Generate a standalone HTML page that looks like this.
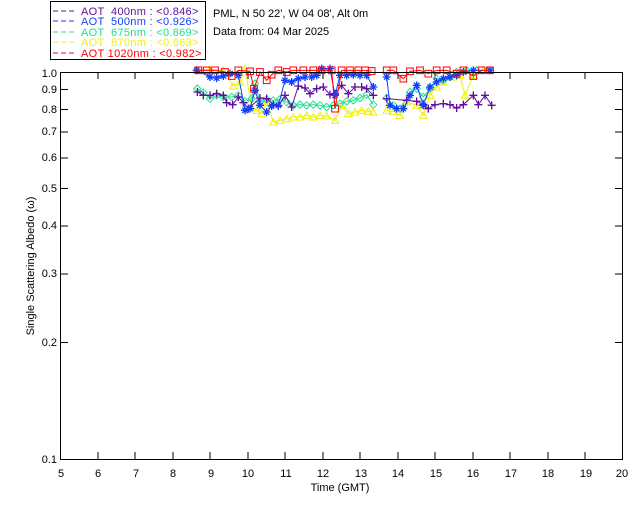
<!DOCTYPE html>
<html><head><meta charset="utf-8"><style>
body{margin:0;background:#fff;width:640px;height:512px;overflow:hidden}
svg text{font-family:"Liberation Sans",sans-serif;font-size:11px}
</style></head><body>
<svg width="640" height="512" xmlns="http://www.w3.org/2000/svg">
<defs>
<marker id="mp" markerUnits="userSpaceOnUse" markerWidth="24" markerHeight="24" refX="12" refY="12" overflow="visible"><path d="M0 12H24M12 0V24" stroke="#6010a0" stroke-width="4" fill="none"/></marker>
<marker id="mb" markerUnits="userSpaceOnUse" markerWidth="24" markerHeight="24" refX="12" refY="12" overflow="visible"><path d="M0 12H24M12 0V24M4 4L20 20M20 4L4 20" stroke="#1040ff" stroke-width="4" fill="none"/></marker>
<marker id="mc" markerUnits="userSpaceOnUse" markerWidth="24" markerHeight="24" refX="12" refY="12" overflow="visible"><path d="M12 1L23 12L12 23L1 12Z" stroke="#20e090" stroke-width="3" fill="none"/></marker>
<marker id="my" markerUnits="userSpaceOnUse" markerWidth="24" markerHeight="24" refX="12" refY="12" overflow="visible"><path d="M12 2L23 21H1Z" stroke="#f0f000" stroke-width="3" fill="none"/></marker>
<marker id="mr" markerUnits="userSpaceOnUse" markerWidth="24" markerHeight="24" refX="12" refY="12" overflow="visible"><path d="M2 2H22V22H2Z" stroke="#ff0000" stroke-width="3" fill="none"/></marker>
</defs>
<rect x="50.5" y="1.5" width="155" height="58" fill="#fff" stroke="#000"/>
<g stroke-dasharray="5,3" stroke-width="1">
<line x1="53" y1="11" x2="77" y2="11" stroke="#6010a0"/>
<line x1="53" y1="21" x2="77" y2="21" stroke="#1040ff"/>
<line x1="53" y1="32" x2="77" y2="32" stroke="#20e090"/>
<line x1="53" y1="42" x2="77" y2="42" stroke="#f0f000"/>
<line x1="53" y1="53" x2="77" y2="53" stroke="#ff0000"/>
</g>
<g letter-spacing="0.3">
<text x="81" y="15" fill="#6010a0" xml:space="preserve">AOT  400nm : &lt;0.846&gt;</text>
<text x="81" y="25" fill="#1040ff" xml:space="preserve">AOT  500nm : &lt;0.926&gt;</text>
<text x="81" y="36" fill="#20e090" xml:space="preserve">AOT  675nm : &lt;0.869&gt;</text>
<text x="81" y="46" fill="#f0f000" xml:space="preserve">AOT  870nm : &lt;0.863&gt;</text>
<text x="81" y="57" fill="#ff0000" xml:space="preserve">AOT 1020nm : &lt;0.982&gt;</text>
</g>
<text x="213" y="17" fill="#000">PML, N 50 22', W 04 08', Alt 0m</text>
<text x="213" y="35" fill="#000">Data from: 04 Mar 2025</text>
<rect x="60.5" y="72.5" width="562" height="387" fill="none" stroke="#000"/>
<g stroke="#000">
<path d="M98 72v7M135 72v7M173 72v7M210 72v7M248 72v7M285 72v7M323 72v7M360 72v7M398 72v7M435 72v7M473 72v7M510 72v7M548 72v7M585 72v7"/>
<path d="M98 459v-7M135 459v-7M173 459v-7M210 459v-7M248 459v-7M285 459v-7M323 459v-7M360 459v-7M398 459v-7M435 459v-7M473 459v-7M510 459v-7M548 459v-7M585 459v-7"/>
<path d="M60 89.5h8M60 109.5h8M60 132h8M60 158h8M60 188.5h8M60 226h8M60 274h8M60 342.5h8"/>
<path d="M623 89.5h-8M623 109.5h-8M623 132h-8M623 158h-8M623 188.5h-8M623 226h-8M623 274h-8M623 342.5h-8"/>
</g>
<g fill="#000" text-anchor="end">
<text x="57" y="77">1.0</text><text x="57" y="93">0.9</text><text x="57" y="113">0.8</text><text x="57" y="135">0.7</text><text x="57" y="161">0.6</text><text x="57" y="192">0.5</text><text x="57" y="229">0.4</text><text x="57" y="277">0.3</text><text x="57" y="346">0.2</text><text x="57" y="463">0.1</text>
</g>
<g fill="#000" text-anchor="middle">
<text x="61" y="477">5</text><text x="98" y="477">6</text><text x="136" y="477">7</text><text x="173" y="477">8</text><text x="211" y="477">9</text><text x="248" y="477">10</text><text x="286" y="477">11</text><text x="323" y="477">12</text><text x="361" y="477">13</text><text x="398" y="477">14</text><text x="436" y="477">15</text><text x="473" y="477">16</text><text x="511" y="477">17</text><text x="548" y="477">18</text><text x="586" y="477">19</text><text x="622" y="477">20</text>
<text x="340" y="491">Time (GMT)</text>
<text transform="translate(34,266) rotate(-90)">Single Scattering Albedo (ω)</text>
</g>
<g transform="translate(190,62) scale(0.33333)" fill="none" stroke-width="3">
<polyline stroke="#f0f000" marker-start="url(#my)" marker-mid="url(#my)" marker-end="url(#my)" points="20,22 60,22 100,25 130,72 150,60 165,20 185,135 200,145 215,155 230,120 250,180 270,175 290,170 310,165 330,165 350,160 370,165 390,160 410,162 435,175 455,130 475,155 495,150 515,145 535,148 550,150"/>
<polyline stroke="#f0f000" marker-start="url(#my)" marker-mid="url(#my)" marker-end="url(#my)" points="590,145 610,148 630,160 650,120 680,130 700,160 720,100 740,75 760,60 790,45 810,40 825,100 850,40 880,25"/>
<polyline stroke="#20e090" marker-start="url(#mc)" marker-mid="url(#mc)" marker-end="url(#mc)" points="22,80 40,92 60,110 80,100 100,105 125,105 145,100 165,118 185,110 195,65 210,120 230,112 250,115 270,112 290,120 310,130 330,128 350,130 370,128 390,130 410,135 430,130 450,125 470,118 490,115 510,108 530,98 550,128"/>
<polyline stroke="#20e090" marker-start="url(#mc)" marker-mid="url(#mc)" marker-end="url(#mc)" points="590,108 610,130 630,140 660,90 680,80 700,105 720,80 740,50 760,55 780,45 800,30 830,25 860,25"/>
<polyline stroke="#6010a0" marker-start="url(#mp)" marker-mid="url(#mp)" marker-end="url(#mp)" points="22,90 40,100 60,100 80,95 100,100 110,122 128,128 145,105 160,122 175,140 210,108 230,110 250,128 265,132 285,100 305,135 325,72 345,78 360,95 380,80 400,75 420,98 435,95 455,70 475,95 495,75 515,75 530,80 550,100"/>
<polyline stroke="#6010a0" marker-start="url(#mp)" marker-mid="url(#mp)" marker-end="url(#mp)" points="590,110 650,115 680,118 700,128 715,140 735,128 760,125 780,128 800,138 820,128 850,100 865,128 885,100 905,130"/>
<polyline stroke="#1040ff" marker-start="url(#mb)" marker-mid="url(#mb)" marker-end="url(#mb)" points="20,25 60,45 80,48 100,42 120,35 145,40 165,145 180,140 195,85 210,130 230,150 245,132 265,130 285,55 305,60 325,50 345,45 365,45 380,40 395,20 420,20 435,100 450,40 470,40 490,38 510,40 530,40 550,75"/>
<polyline stroke="#1040ff" marker-start="url(#mb)" marker-mid="url(#mb)" marker-end="url(#mb)" points="590,45 600,130 620,140 640,140 660,100 680,70 700,130 720,75 740,60 760,50 780,45 800,40 820,30 850,25 900,25"/>
<polyline stroke="#ff0000" marker-start="url(#mr)" marker-mid="url(#mr)" marker-end="url(#mr)" points="25,25 50,25 75,25 105,30 125,42 145,25 180,28 192,80 210,30 230,55 245,38 265,25 290,30 310,25 340,25 370,25 395,25 425,25 435,140 455,25 480,25 505,25 525,25 545,27"/>
<polyline stroke="#ff0000" marker-start="url(#mr)" marker-mid="url(#mr)" marker-end="url(#mr)" points="590,25 610,25 640,50 660,28 690,25 715,35 740,25 770,25 800,35 820,25 850,42 875,25 900,25"/>
</g>
<line x1="60" y1="72.5" x2="623" y2="72.5" stroke="#000"/>
</svg>
</body></html>
